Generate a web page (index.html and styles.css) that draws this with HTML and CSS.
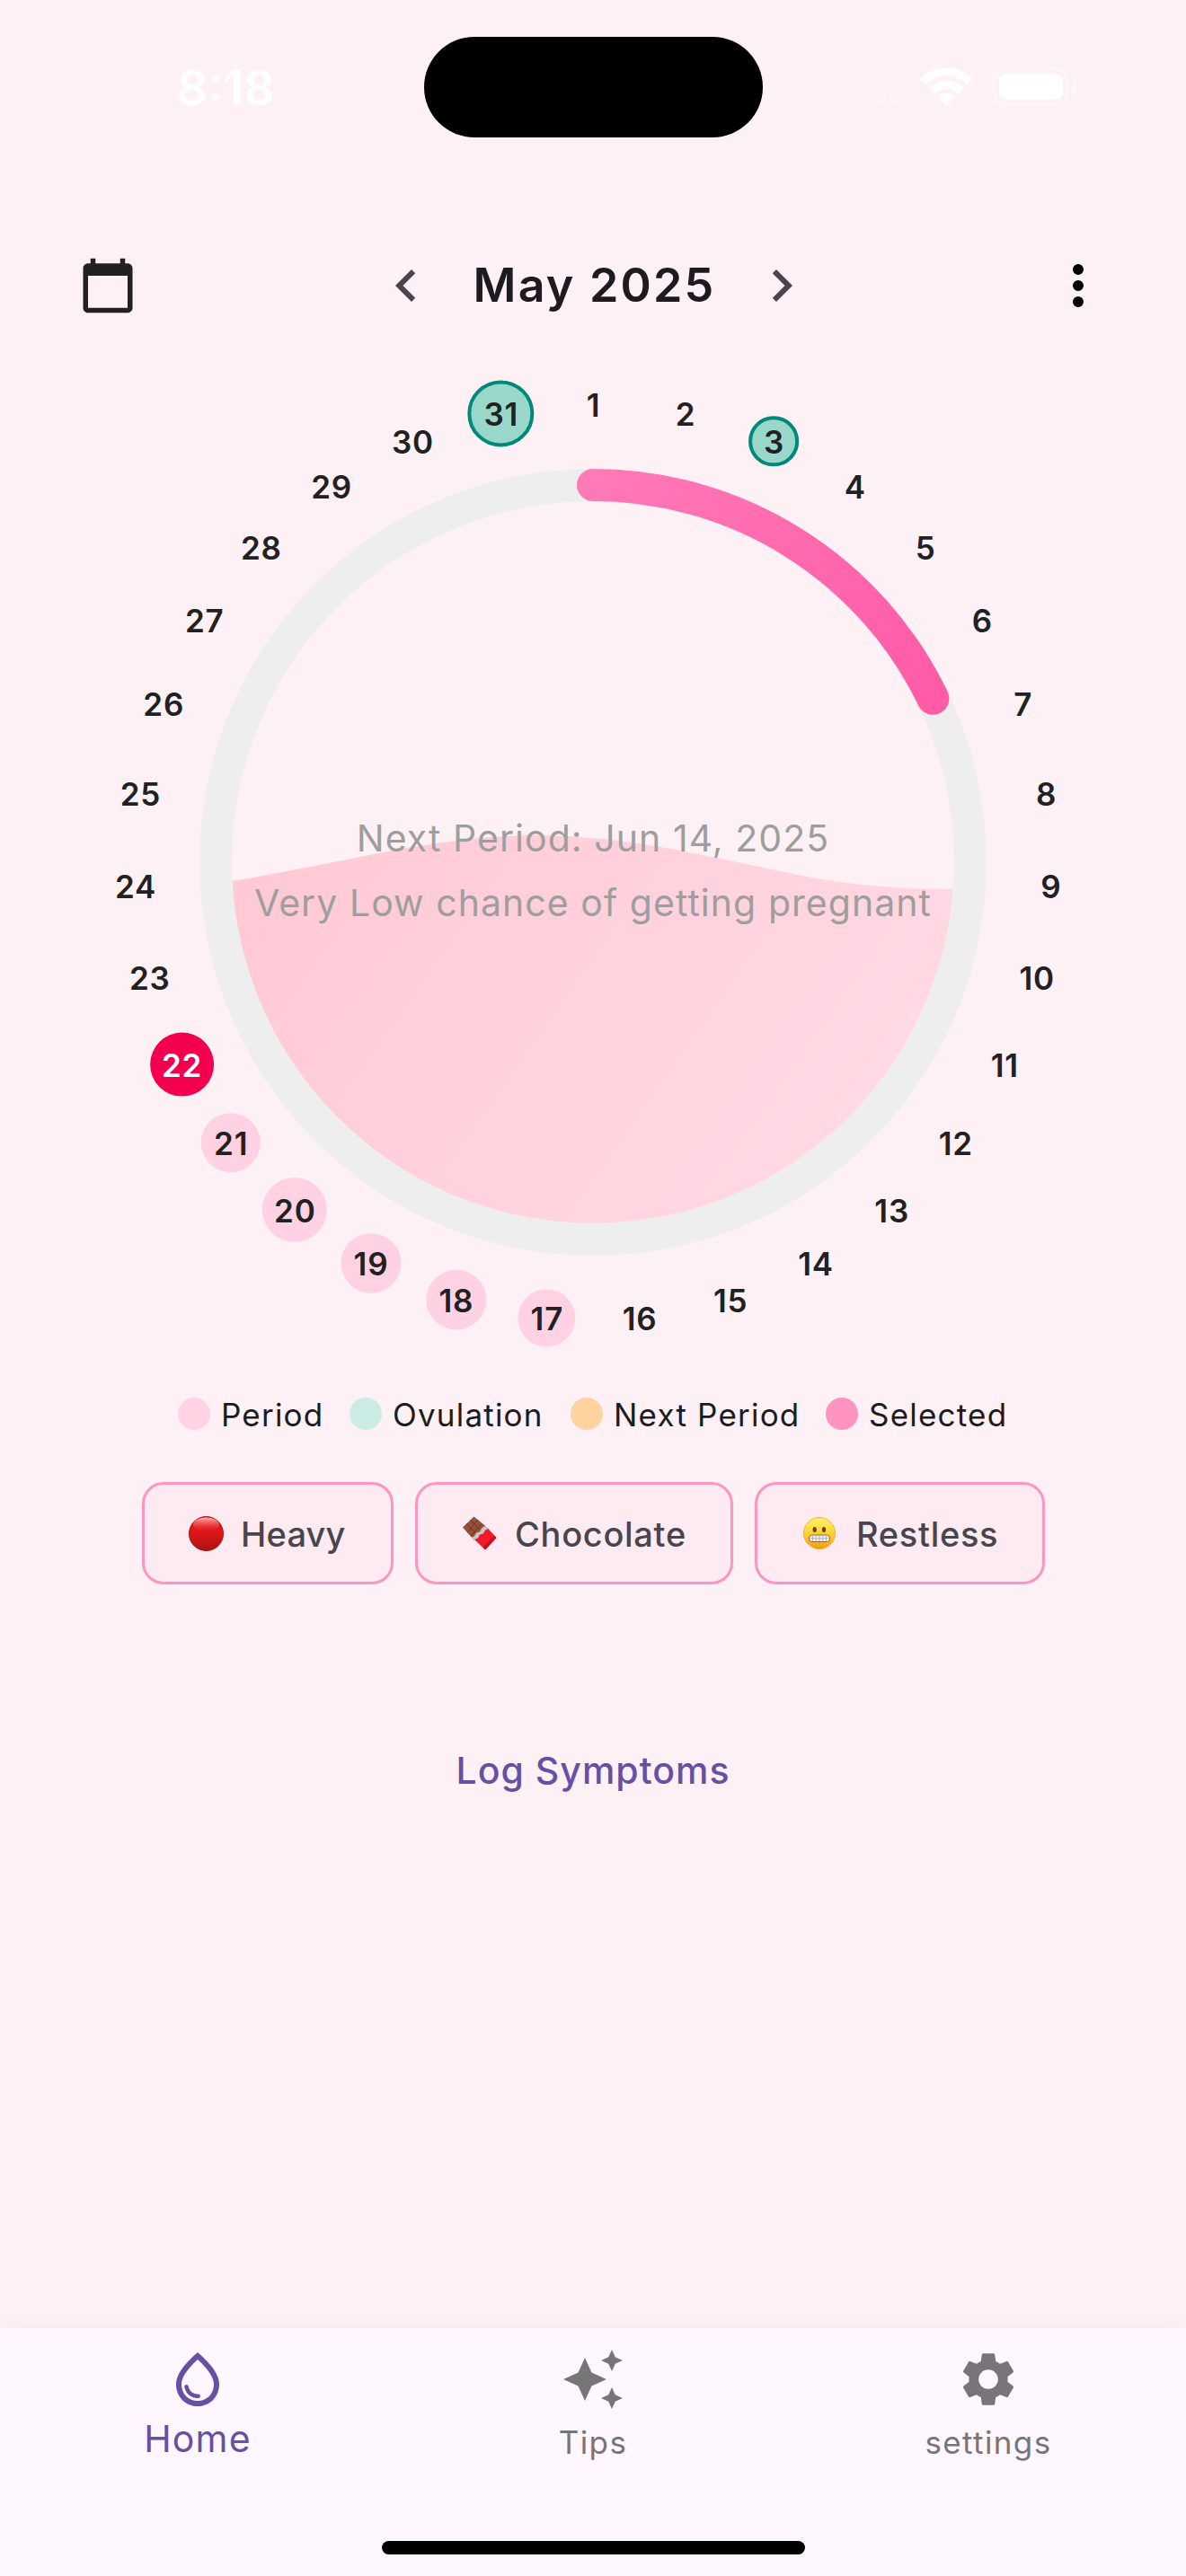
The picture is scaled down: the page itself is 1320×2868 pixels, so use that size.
FILE: index.html
```html
<!DOCTYPE html>
<html lang="en">
<head>
<meta charset="utf-8">
<title>Cycle Calendar</title>
<link rel="stylesheet" href="styles.css">
</head>
<body>
<div class="screen">
  <div class="status">
    <div class="time">8:18</div>
    <div class="island"></div>
    <svg class="indicators" width="270" height="52" viewBox="930 70 270 52">
      <g fill="#fff" fill-opacity=".22">
        <rect x="936.5" y="105.500" width="12" height="12" rx="4.500"/>
        <rect x="954.500" y="105.500" width="12" height="12" rx="4.500"/>
        <rect x="972.500" y="105.500" width="12" height="12" rx="4.500"/>
        <rect x="990.500" y="105.500" width="12" height="12" rx="4.500"/>
      </g>
      <path fill="#fff" fill-opacity=".4" d="M1193 89.500c3 1 5 4 5 7.500s-2 6.500-5 7.500z"/>
      <path fill="#fff" d="M1053.500 75.500c11 0 21 4.300 28.500 11.500q1 1 0 2l-4.500 4.200q-1 1-2 0c-6-5.700-13.700-9-22-9s-16 3.300-22 9q-1 1-2 0l-4.500-4.200q-1-1 0-2c7.500-7.200 17.500-11.500 28.500-11.500z"/>
      <path fill="#fff" d="M1053.500 89.800c7 0 13.500 2.700 18.400 7.200q1 1 0 2l-4.600 4.400q-1 .9-2 0c-3.200-2.900-7.300-4.700-11.800-4.700s-8.600 1.800-11.800 4.700q-1 .9-2 0l-4.600-4.400q-1-1 0-2c4.900-4.500 11.400-7.200 18.400-7.200z"/>
      <path fill="#fff" d="M1053.500 104c3.300 0 6.200 1.200 8.500 3.200q.9.900 0 1.800l-7.600 7.800q-.9.800-1.800 0l-7.600-7.800q-.9-.9 0-1.800c2.300-2 5.200-3.200 8.500-3.200z"/>
      <rect x="1106.500" y="76.800" width="81.500" height="39.800" rx="13" fill="none" stroke="#fff" stroke-opacity=".38" stroke-width="3.500"/>
      <rect x="1112" y="82" width="71" height="29" rx="8.500" fill="#fff"/>
    </svg>
  </div>

  <header class="header">
    <svg class="calendar" width="66" height="66" viewBox="0 0 24 24"><path fill="#212121" d="M20 3h-1V1h-2v2H7V1H5v2H4c-1.100 0-2 .9-2 2v16c0 1.100.9 2 2 2h16c1.100 0 2-.9 2-2V5c0-1.100-.9-2-2-2zm0 18H4V8h16v13z"/></svg>
    <div class="month">
      <svg width="72" height="72" viewBox="0 0 24 24"><path fill="#49454f" d="M15.410 7.410 14 6l-6 6 6 6 1.410-1.410L10.830 12z"/></svg>
      <h1 class="title">May 2025</h1>
      <svg width="72" height="72" viewBox="0 0 24 24"><path fill="#49454f" d="M10 6 8.590 7.410 13.170 12l-4.580 4.590L10 18l6-6z"/></svg>
    </div>
    <svg class="more" width="72" height="72" viewBox="0 0 24 24"><path d="M12 8a2 2 0 1 0 0-4 2 2 0 0 0 0 4zm0 2a2 2 0 1 0 0 4 2 2 0 0 0 0-4zm0 6a2 2 0 1 0 0 4 2 2 0 0 0 0-4z"/></svg>
  </header>

  <main class="dial">
    <svg class="ring" width="876" height="876" viewBox="222 522 876 876">
      <defs>
        <linearGradient id="arc" gradientUnits="userSpaceOnUse" x1="660" y1="520" x2="1050" y2="760">
          <stop offset="0" stop-color="#ff7ab7"/><stop offset="1" stop-color="#ff5ba7"/>
        </linearGradient>
        <linearGradient id="water" gradientUnits="userSpaceOnUse" x1="390" y1="900" x2="960" y2="1300">
          <stop offset="0" stop-color="#ffcad6"/><stop offset="1" stop-color="#ffdae4"/>
        </linearGradient>
        <clipPath id="inner"><circle cx="660" cy="960" r="402"/></clipPath>
      </defs>
      <path clip-path="url(#inner)" fill="url(#water)" d="M250 982.500L258 981C290 976 320 970 350 964.300S415 951 450 944.600S545 930 595 930S700 936 750 945.700S840 964 907 977.700C950 985 1000 990 1066 989.800V1400H250z"/>
      <circle cx="660" cy="960" r="420" fill="none" stroke="#eee" stroke-width="36"/>
      <path d="M660 540A420 420 0 0 1 1038.400 777.800" fill="none" stroke="url(#arc)" stroke-width="36" stroke-linecap="round"/>
    </svg>
    <div class="summary">
      <p>Next Period: Jun 14, 2025</p>
      <p>Very Low chance of getting pregnant</p>
    </div>
    <span class="day" style="--i:0">1</span>
    <span class="day" style="--i:1">2</span>
    <span class="day ovulation" style="--i:2;--d:55.500px">3</span>
    <span class="day" style="--i:3">4</span>
    <span class="day" style="--i:4">5</span>
    <span class="day" style="--i:5">6</span>
    <span class="day" style="--i:6">7</span>
    <span class="day" style="--i:7">8</span>
    <span class="day" style="--i:8">9</span>
    <span class="day" style="--i:9">10</span>
    <span class="day" style="--i:10">11</span>
    <span class="day" style="--i:11">12</span>
    <span class="day" style="--i:12">13</span>
    <span class="day" style="--i:13">14</span>
    <span class="day" style="--i:14">15</span>
    <span class="day" style="--i:15">16</span>
    <span class="day period" style="--i:16;--d:64.500px">17</span>
    <span class="day period" style="--i:17;--d:67px">18</span>
    <span class="day period" style="--i:18;--d:67px">19</span>
    <span class="day period" style="--i:19;--d:72px">20</span>
    <span class="day period" style="--i:20;--d:66px">21</span>
    <span class="day today" style="--i:21;--d:71px">22</span>
    <span class="day" style="--i:22">23</span>
    <span class="day" style="--i:23">24</span>
    <span class="day" style="--i:24">25</span>
    <span class="day" style="--i:25">26</span>
    <span class="day" style="--i:26">27</span>
    <span class="day" style="--i:27">28</span>
    <span class="day" style="--i:28">29</span>
    <span class="day" style="--i:29">30</span>
    <span class="day ovulation" style="--i:30;--d:74px">31</span>
  </main>

  <ul class="legend">
    <li><i class="dot dot-period"></i><span>Period</span></li>
    <li><i class="dot dot-ovulation"></i><span>Ovulation</span></li>
    <li><i class="dot dot-next"></i><span>Next Period</span></li>
    <li><i class="dot dot-selected"></i><span>Selected</span></li>
  </ul>

  <div class="chips">
    <div class="chip chip-flow">
      <svg width="39" height="39" viewBox="0 0 39 39">
        <defs>
          <linearGradient id="ball" x1="0" y1="0" x2="0" y2="1"><stop offset="0" stop-color="#e21d1d"/><stop offset=".5" stop-color="#dc1616"/><stop offset="1" stop-color="#aa1111"/></linearGradient>
          <linearGradient id="shine" x1="0" y1="0" x2="0" y2="1"><stop offset="0" stop-color="#ffb0b0"/><stop offset="1" stop-color="#f03030" stop-opacity="0"/></linearGradient>
        </defs>
        <circle cx="19.500" cy="19.500" r="19" fill="url(#ball)" stroke="#a81010"/>
        <ellipse cx="19.500" cy="9.500" rx="14.500" ry="8" fill="url(#shine)"/>
      </svg>
      <span>Heavy</span>
    </div>
    <div class="chip chip-craving">
      <svg width="38" height="38" viewBox="0 0 38 38">
        <path fill="#96503a" d="M12.500.5 26 11.500 12 26 0 12.500z"/>
        <path fill="none" stroke="#6f3625" d="M4 8.500 17 21M8.500 4.500 22 17M17 4.500 5 18M21.500 8.500 9 22"/>
        <path fill="#f2182b" d="M27 12.500 37.500 24 25 37.500 12 25z"/>
        <path fill="#c80f22" d="M37.500 24 25 37.500 22.500 35 35 21.500z"/>
        <path fill="#c9c4c3" d="m25 10.500 3 4-3 1-2 4-4 1-2 4-3 1-1 3-3-5 3-1 2-4 4-1 2-4z"/>
      </svg>
      <span>Chocolate</span>
    </div>
    <div class="chip chip-mood">
      <svg width="36" height="36" viewBox="0 0 36 36">
        <defs>
          <linearGradient id="face" x1="0" y1="0" x2="0" y2="1"><stop offset="0" stop-color="#fff36a"/><stop offset=".55" stop-color="#ffd02a"/><stop offset="1" stop-color="#f39a0c"/></linearGradient>
        </defs>
        <circle cx="18" cy="18" r="17.500" fill="url(#face)" stroke="#eda51c" stroke-width=".8"/>
        <ellipse cx="12.700" cy="14" rx="2.200" ry="3" fill="#6d4208"/>
        <ellipse cx="23" cy="14" rx="2.200" ry="3" fill="#6d4208"/>
        <rect x="6.500" y="20" width="23" height="7.500" rx="3" fill="#f4f2ee" stroke="#8a6a3a"/>
        <path stroke="#a9a6a2" stroke-width=".8" d="M7 23.800h22M10.500 20.500v6.500M14.300 20.500v6.500M18 20.500v6.500M21.700 20.500v6.500M25.500 20.500v6.500"/>
      </svg>
      <span>Restless</span>
    </div>
  </div>

  <div class="log">Log Symptoms</div>

  <nav class="nav">
    <div class="tab active">
      <svg width="72" height="72" viewBox="0 0 24 24"><path d="M12 2c-5.330 4.550-8 8.480-8 11.800 0 4.980 3.800 8.200 8 8.200s8-3.220 8-8.200c0-3.320-2.670-7.250-8-11.800zm0 18c-3.350 0-6-2.570-6-6.200 0-2.340 1.950-5.440 6-9.140 4.050 3.700 6 6.790 6 9.140 0 3.630-2.650 6.200-6 6.200zm-4.170-6c.37 0 .67.26.74.62.41 2.220 2.280 2.980 3.640 2.870.43-.02.79.32.79.75 0 .4-.32.73-.72.75-2.130.13-4.620-1.090-5.190-4.120-.08-.45.28-.87.74-.87z"/></svg>
      <span>Home</span>
    </div>
    <div class="tab">
      <svg width="72" height="72" viewBox="0 0 24 24"><path d="M19 9l1.250-2.750L23 5l-2.750-1.250L19 1l-1.250 2.750L15 5l2.750 1.250L19 9zm-7.500.5L9 4 6.500 9.500 1 12l5.500 2.500L9 20l2.500-5.500L17 12l-5.500-2.500zM19 15l-1.250 2.750L15 19l2.750 1.250L19 23l1.250-2.750L23 19l-2.750-1.250L19 15z"/></svg>
      <span>Tips</span>
    </div>
    <div class="tab">
      <svg width="72" height="72" viewBox="0 0 24 24"><path d="M19.140 12.940c.04-.3.06-.61.06-.94 0-.32-.02-.64-.07-.94l2.030-1.580c.18-.14.23-.41.12-.61l-1.920-3.320c-.12-.22-.37-.29-.59-.22l-2.390.96c-.5-.38-1.030-.7-1.620-.94l-.36-2.540c-.04-.24-.24-.41-.48-.41h-3.840c-.24 0-.43.17-.47.41l-.36 2.540c-.59.24-1.130.57-1.620.94l-2.390-.96c-.22-.08-.47 0-.59.22L2.740 8.870c-.12.21-.08.47.12.61l2.030 1.580c-.05.3-.09.63-.09.94s.02.64.07.94l-2.030 1.580c-.18.14-.23.41-.12.61l1.920 3.320c.12.22.37.29.59.22l2.390-.96c.5.38 1.030.7 1.620.94l.36 2.540c.05.24.24.41.48.41h3.840c.24 0 .44-.17.47-.41l.36-2.540c.59-.24 1.130-.56 1.620-.94l2.390.96c.22.08.47 0 .59-.22l1.920-3.320c.12-.22.07-.47-.12-.61l-2.010-1.580zM12 15.600c-1.980 0-3.600-1.620-3.600-3.600s1.620-3.600 3.600-3.600 3.600 1.620 3.600 3.600-1.620 3.600-3.600 3.600z"/></svg>
      <span>settings</span>
    </div>
    <div class="home-indicator"></div>
  </nav>
</div>
</body>
</html>
```
FILE: styles.css
```css
* { box-sizing: border-box; margin: 0; padding: 0; }
svg { display: block; flex: none; }
body { background: #fef1f5; font-family: Inter, "Liberation Sans", sans-serif; color: #1d1b20; }

.screen { width: 1320px; height: 2868px; display: flex; flex-direction: column; overflow: hidden; }

.status { height: 194px; display: grid; grid-template-columns: 1fr 377px 1fr; align-items: center; }
.time { padding-left: 31px; text-align: center; font-size: 54px; font-weight: 600; color: #fff; }
.island { height: 112px; border-radius: 56px; background: #000; }
.indicators { justify-self: end; margin-right: 120px; margin-top: -2px; }

.header { height: 132px; margin-top: 58px; padding: 0 84px 0 87px; display: grid; grid-template-columns: 1fr 490px 1fr; align-items: center; }
.header .more { justify-self: end; }
.month { display: flex; align-items: center; justify-content: space-between; margin: 0 1px 0 -1px; }
.title { font-size: 52px; font-weight: 600; letter-spacing: 2.2px; white-space: nowrap; padding: 0 0 2px 2px; }

.dial { height: 1152px; display: grid; place-items: center; }
.dial > * { grid-area: 1 / 1; }
.summary { text-align: center; color: #9e9e9e; font-size: 41px; line-height: 72px; letter-spacing: 1.05px; white-space: nowrap; padding-top: 18px; }

.day {
  --a: calc(var(--i) * 360deg / 31);
  width: var(--d, 60px);
  height: var(--d, 60px);
  display: grid;
  place-items: center;
  padding: 2px 0 0 1px;
  border-radius: 50%;
  font-size: 35px;
  font-weight: 600;
  letter-spacing: .8px;
  color: #212121;
  transform: translate(calc(sin(var(--a)) * 510px), calc(cos(var(--a)) * -510px));
}
.ovulation { background: #99d7cb; border: 4px solid #00897b; }
.period { background: #ffd2e3; }
.today { background: #f2004f; color: #fff; }

.legend { list-style: none; height: 36px; margin: 19px 0 0 198px; display: grid; grid-template-columns: 191px 246px 284px 204px; font-size: 35px; line-height: 36px; letter-spacing: 1.2px; white-space: nowrap; }
.legend li { display: flex; align-items: center; gap: 12px; }
.legend span { padding-top: 2px; }
.dot { flex: none; width: 36px; height: 36px; border-radius: 50%; }
.dot-period { background: #ffd3e4; }
.dot-ovulation { background: #cbece4; }
.dot-next { background: #ffd3a0; }
.dot-selected { background: #ff94c1; }

.chips { height: 114px; margin: 59px 157px 0 158px; display: flex; gap: 24px; }
.chip { display: flex; align-items: center; border: 3px solid #ff94c1; border-radius: 24px; background: #feebf2; color: #49454f; font-size: 38px; font-weight: 500; letter-spacing: .7px; white-space: nowrap; }
.chip span { padding-top: 2px; }
.chip-flow { width: 280px; padding-left: 49px; gap: 19px; letter-spacing: .2px; }
.chip-craving { width: 354px; padding-left: 50px; gap: 20px; }
.chip-mood { width: 323px; padding-left: 51px; gap: 23px; }

.log { height: 120px; margin-top: 147px; line-height: 120px; text-align: center; font-size: 41px; font-weight: 500; letter-spacing: 1px; color: #6750a4; }

.nav { position: relative; height: 276px; margin-top: auto; display: grid; grid-template-columns: repeat(3, 1fr); background: #fef7ff; box-shadow: 0 0 24px rgba(80, 40, 40, .05); }
.tab { padding-top: 21px; display: flex; flex-direction: column; align-items: center; color: #787579; font-size: 35px; line-height: 48px; letter-spacing: 1.4px; }
.tab svg { fill: currentColor; }
.tab span { margin-top: 10px; }
.tab.active { color: #6750a4; font-size: 41px; letter-spacing: 1.2px; }
.tab.active span { margin-top: 6px; }
.home-indicator { position: absolute; left: 425px; top: 237px; width: 471px; height: 15px; border-radius: 8px; background: #000; }
```
